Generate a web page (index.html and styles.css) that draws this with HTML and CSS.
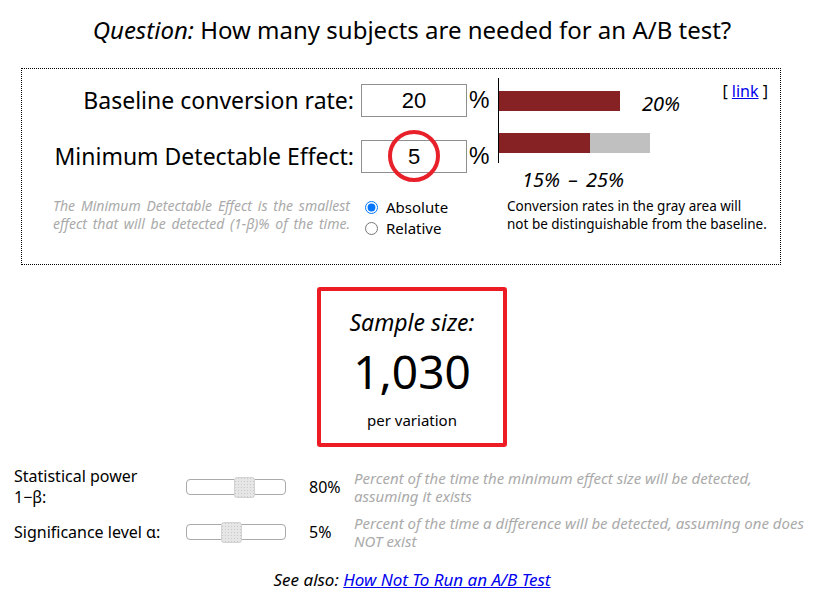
FILE: index.html
```html
<!DOCTYPE html>
<html lang="en">
<head>
<meta charset="utf-8">
<title>Sample Size Calculator</title>
<link rel="stylesheet" href="styles.css">
</head>
<body>
<h1 class="title"><em>Question:</em> How many subjects are needed for an A/B test?</h1>

<section class="panel">
  <div class="panel-top">
    <div class="fields">
      <label class="field-label" for="baseline">Baseline conversion rate:</label>
      <input class="field-input" id="baseline" type="text" value="20">
      <span class="pct">%</span>

      <label class="field-label" for="mde">Minimum Detectable Effect:</label>
      <span class="input-wrap">
        <input class="field-input" id="mde" type="text" value="5">
        <span class="circle"></span>
      </span>
      <span class="pct">%</span>
    </div>
    <div class="chart-col">
      <div class="chart">
        <div class="bar-row">
          <div class="bar bar-base" style="width:121px"></div>
          <span class="bar-value">20%</span>
        </div>
        <div class="bar-row">
          <div class="bar bar-base" style="width:91px"></div>
          <div class="bar bar-gray" style="width:60px"></div>
        </div>
      </div>
      <div class="range-label">15% – 25%</div>
    </div>
    <div class="link">[ <a href="#">link</a> ]</div>
  </div>
  <div class="panel-bottom">
    <p class="help-left">The Minimum Detectable Effect is the smallest<br>effect that will be detected (1-β)% of the time.</p>
    <div class="radios">
      <label class="radio"><input type="radio" name="mode" checked> Absolute</label>
      <label class="radio"><input type="radio" name="mode"> Relative</label>
    </div>
    <p class="help-right">Conversion rates in the gray area will<br>not be distinguishable from the baseline.</p>
  </div>
</section>

<section class="result">
  <div class="result-title">Sample size:</div>
  <div class="result-value">1,030</div>
  <div class="result-unit">per variation</div>
</section>

<section class="settings">
  <div class="set-label">Statistical power<br>1−β:</div>
  <input class="slider" type="range" min="50" max="99" value="80">
  <div class="set-value">80%</div>
  <div class="set-help">Percent of the time the minimum effect size will be detected, assuming it exists</div>

  <div class="set-label">Significance level α:</div>
  <input class="slider" type="range" min="1" max="10" value="5">
  <div class="set-value">5%</div>
  <div class="set-help">Percent of the time a difference will be detected, assuming one does NOT exist</div>
</section>

<p class="see-also"><em>See also: <a href="#">How Not To Run an A/B Test</a></em></p>
</body>
</html>
```

FILE: styles.css
```css
html, body {
  margin: 0;
  padding: 0;
  background: #fff;
}

body {
  width: 824px;
  font-family: "Noto Sans", "Open Sans", sans-serif;
  color: #000;
}

.title {
  margin: 14px 0 0;
  font-size: 24px;
  line-height: 32px;
  font-weight: normal;
  text-align: center;
}

.title em {
  font-style: italic;
}

/* ---------- top panel ---------- */
.panel {
  box-sizing: border-box;
  width: 760px;
  height: 197px;
  margin: 22px 0 0 21px;
  border: 1px dotted #000;
}

.panel-top {
  display: flex;
  align-items: flex-start;
}

.fields {
  display: grid;
  grid-template-columns: 339px 106px 31px;
  row-gap: 23px;
  margin-top: 15px;
  align-items: center;
}

.field-label {
  padding-right: 7px;
  text-align: right;
  font-size: 23px;
  line-height: 33px;
}

.input-wrap {
  position: relative;
  display: block;
  height: 33px;
}

.field-input {
  display: block;
  box-sizing: border-box;
  width: 106px;
  height: 33px;
  margin: 0;
  padding: 0;
  border: 1px solid #8f8f8f;
  font-family: "Liberation Sans", Arial, sans-serif;
  font-size: 22px;
  text-align: center;
  color: #000;
  background: #fff;
}

.circle {
  position: absolute;
  left: 27px;
  top: -10px;
  width: 44px;
  height: 44px;
  border: 4px solid #e8202a;
  border-radius: 50%;
}

.pct {
  padding-left: 2px;
  font-family: "Liberation Sans", Arial, sans-serif;
  font-size: 23px;
  line-height: 33px;
}

.chart-col {
  display: flex;
  flex-direction: column;
}

.chart {
  box-sizing: border-box;
  height: 85px;
  margin-top: 9px;
  padding-top: 13px;
  border-left: 1px solid #000;
  display: flex;
  flex-direction: column;
  row-gap: 22px;
}

.bar-row {
  display: flex;
  align-items: flex-end;
  height: 20px;
}

.bar {
  height: 20px;
}

.bar-base {
  background: #862224;
}

.bar-gray {
  background: #c0c0c0;
}

.bar-value {
  margin-left: 22px;
  font-size: 20px;
  font-style: italic;
  line-height: 20px;
  position: relative;
  top: 3px;
}

.range-label {
  margin: 6px 0 0 24px;
  font-size: 20px;
  font-style: italic;
  line-height: 22px;
  word-spacing: 3px;
}

.link {
  margin: 12px 12px 0 auto;
  font-size: 16px;
  line-height: 20px;
}

.link a {
  color: #0000ee;
}

.panel-bottom {
  display: flex;
  align-items: flex-start;
  margin-top: 6px;
}

.help-left {
  box-sizing: border-box;
  width: 339px;
  margin: 0;
  padding: 0 11px 0 31px;
  font-size: 14px;
  line-height: 18px;
  font-style: italic;
  color: #aaa;
  text-align: justify;
  text-align-last: justify;
}

.radios {
  width: 146px;
  display: flex;
  flex-direction: column;
  margin-top: 0;
}

.radio {
  font-size: 15px;
  line-height: 21px;
  display: flex;
  align-items: center;
}

.radio input {
  margin: 0 8px 0 4px;
  width: 13px;
  height: 13px;
}

.help-right {
  margin: 0;
  font-size: 13.5px;
  line-height: 18px;
}

/* ---------- result ---------- */
.result {
  box-sizing: border-box;
  width: 190px;
  height: 160px;
  margin: 22px auto 0;
  border: 4px solid #ed1c24;
  border-radius: 3px;
  text-align: center;
  padding-top: 15px;
}

.result-title {
  font-size: 23px;
  font-style: italic;
  line-height: 32px;
}

.result-value {
  font-size: 46px;
  line-height: 56px;
  margin-top: 5px;
}

.result-unit {
  font-size: 15px;
  line-height: 22px;
  margin-top: 10px;
}

/* ---------- settings ---------- */
.settings {
  display: grid;
  grid-template-columns: 172px 100px 68px 455px;
  row-gap: 6px;
  align-items: center;
  margin: 19px 0 0 14px;
}

.set-label {
  font-size: 16px;
  line-height: 21px;
}

.slider {
  -webkit-appearance: none;
  appearance: none;
  box-sizing: border-box;
  width: 100px;
  height: 16px;
  margin: 0;
  border: 1px solid #aaa;
  border-radius: 4px;
  background: #fff;
}

.slider::-webkit-slider-thumb {
  -webkit-appearance: none;
  appearance: none;
  width: 21px;
  height: 21px;
  border: 1px solid #d3d3d3;
  border-radius: 3px;
  background-color: #e6e6e6;
  background-image: radial-gradient(#c8c8c8 0.6px, transparent 0.8px);
  background-size: 3px 3px;
  background-position: 2px 5px;
}

.set-value {
  padding-left: 23px;
  font-size: 16px;
}

.set-help {
  font-size: 15px;
  line-height: 18px;
  font-style: italic;
  color: #aaa;
}

.see-also {
  margin: 19px 0 0;
  text-align: center;
  font-size: 17px;
  line-height: 22px;
}

.see-also a {
  color: #0000ee;
}
```
